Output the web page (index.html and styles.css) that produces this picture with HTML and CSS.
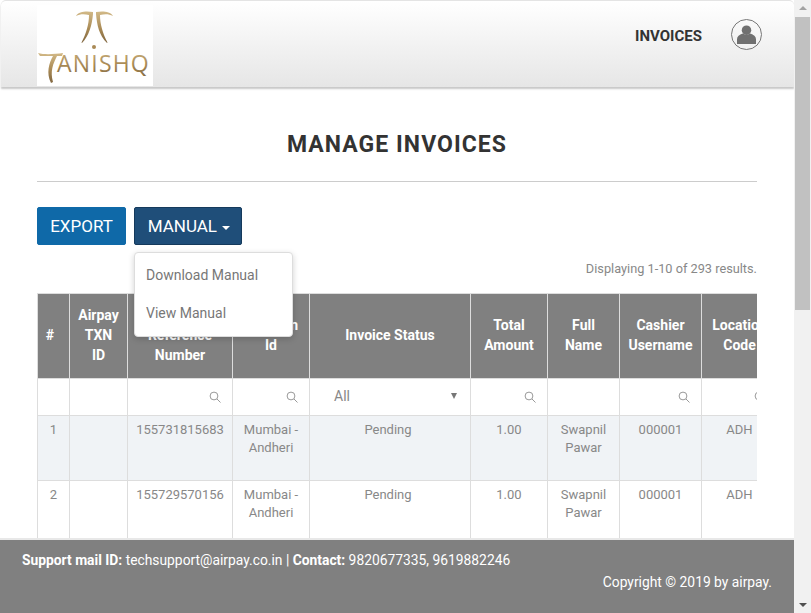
FILE: index.html
```html
<!DOCTYPE html>
<html lang="en">
<head>
  <meta charset="UTF-8" />
  <meta name="viewport" content="width=device-width, initial-scale=1.0">
  <title>Manage Invoices</title>
  <link rel="stylesheet" href="styles.css">
</head>
<body>
  <div class="page">
    <header class="topbar">
      <div class="logo">
        <svg width="116" height="81" viewBox="0 0 116 81">
          <defs>
            <linearGradient id="gold" x1="0" y1="0" x2="0" y2="1">
              <stop offset="0" stop-color="#d2b987"/>
              <stop offset="0.55" stop-color="#a98a55"/>
              <stop offset="1" stop-color="#806640"/>
            </linearGradient>
          </defs>
          <path d="M39 11C42 6 50 6 56 7V9C55 20 52 31 45 38L44.500 37.500C49 29 52 19 52 10 47 9 43 9 39 11z" fill="url(#gold)"/>
          <path d="M76 11C73 6 65 6 59 7V9C60 20 62 30 70 38L70.500 37.500C66 29 63 19 63 10 68 9 72 9 76 11z" fill="url(#gold)"/>
          <circle cx="57" cy="42" r="2" fill="#a98a55"/>
          <path d="M1 48C8 50 18 49 26 48L25 51C23 51 21 51 20 51 16 59 13 66 16 77L14 78C9 68 12 58 16 51 11 51 6 51 3 51z" fill="url(#gold)"/>
          <text class="logo-text" x="20" y="67" fill="url(#gold)">ANISHQ</text>
        </svg>
      </div>
      <nav class="topnav">
        <a class="navlink">INVOICES</a>
        <span class="avatar">
          <svg width="19" height="19" viewBox="0 0 20 20"><circle cx="10" cy="5.500" r="5" fill="#707070"/><path d="M0 20v-5c0-3 2.500-5 6-6 2 1.500 6 1.500 8 0 3.500 1 6 3 6 6v5z" fill="#707070"/></svg>
        </span>
      </nav>
    </header>

    <main class="content">
      <h1 class="title">MANAGE INVOICES</h1>
      <hr class="rule">

      <div class="actions">
        <button class="btn btn-export">EXPORT</button>
        <div class="dropdown">
          <button class="btn btn-manual">MANUAL <span class="caret"></span></button>
          <ul class="dropdown-menu">
            <li>Download Manual</li>
            <li>View Manual</li>
          </ul>
        </div>
      </div>

      <div class="summary">Displaying 1-10 of 293 results.</div>

      <div class="table-wrap">
        <table class="grid">
          <colgroup>
            <col class="c-num"><col class="c-txn"><col class="c-ref"><col class="c-loc"><col class="c-status"><col class="c-total"><col class="c-name"><col class="c-cashier"><col class="c-code">
          </colgroup>
          <thead>
            <tr class="heads">
              <th class="h-num">#</th>
              <th>Airpay TXN ID</th>
              <th>Invoice Reference Number</th>
              <th>Location Id</th>
              <th>Invoice Status</th>
              <th>Total Amount</th>
              <th>Full Name</th>
              <th>Cashier Username</th>
              <th>Location Code</th>
            </tr>
            <tr class="filters">
              <td></td>
              <td></td>
              <td><svg class="search" viewBox="0 0 12 12"><circle cx="5" cy="5" r="3.900"/><path d="M8 8l3.500 3.500"/></svg></td>
              <td><svg class="search" viewBox="0 0 12 12"><circle cx="5" cy="5" r="3.900"/><path d="M8 8l3.500 3.500"/></svg></td>
              <td><div class="select"><span>All</span><span class="select-arrow"></span></div></td>
              <td><svg class="search" viewBox="0 0 12 12"><circle cx="5" cy="5" r="3.900"/><path d="M8 8l3.500 3.500"/></svg></td>
              <td></td>
              <td><svg class="search" viewBox="0 0 12 12"><circle cx="5" cy="5" r="3.900"/><path d="M8 8l3.500 3.500"/></svg></td>
              <td><svg class="search" viewBox="0 0 12 12"><circle cx="5" cy="5" r="3.900"/><path d="M8 8l3.500 3.500"/></svg></td>
            </tr>
          </thead>
          <tbody>
            <tr class="odd">
              <td>1</td><td></td><td>155731815683</td><td>Mumbai - Andheri</td><td class="status">Pending</td><td>1.00</td><td>Swapnil Pawar</td><td>000001</td><td>ADH</td>
            </tr>
            <tr>
              <td>2</td><td></td><td>155729570156</td><td>Mumbai - Andheri</td><td class="status">Pending</td><td>1.00</td><td>Swapnil Pawar</td><td>000001</td><td>ADH</td>
            </tr>
          </tbody>
        </table>
      </div>
    </main>

    <footer class="footer">
      <div><b>Support mail ID:</b> techsupport@airpay.co.in | <b>Contact:</b> 9820677335, 9619882246</div>
      <div class="copy">Copyright © 2019 by airpay.</div>
    </footer>
  </div>

  <div class="scrollbar">
    <span class="arrow-up"></span>
    <span class="thumb"></span>
    <span class="arrow-down"></span>
  </div>
</body>
</html>
```

FILE: styles.css
```css
html, body { margin: 0; height: 100%; overflow: hidden; }
body { display: flex; font-family: Roboto, "Liberation Sans", sans-serif; font-size: 14px; color: #888; background: #fff; }

.page { width: 794px; height: 613px; display: flex; flex-direction: column; }

.topbar { height: 87px; flex: none; box-sizing: border-box; margin-left: 1px; padding: 4px 32px 0 36px; display: flex; justify-content: space-between; background: linear-gradient(#fff, #e6e6e6); border-top: 1px solid #e4e4e4; border-radius: 5px 5px 0 0; box-shadow: 0 2px 2px #c8c8c8; }
.logo { width: 116px; height: 81px; background: #fff; }
.logo svg { display: block; }
.logo-text { font-family: "Open Sans", sans-serif; font-size: 23px; letter-spacing: 1.200px; }

.topnav { display: flex; align-items: flex-start; gap: 29px; padding-top: 14px; }
.navlink { font-weight: 700; font-size: 15px; color: #333; line-height: 34px; }
.avatar { width: 29px; height: 29px; border: 1px solid #777; border-radius: 50%; display: flex; align-items: center; justify-content: center; overflow: hidden; }

.content { flex: 1; min-height: 0; overflow: hidden; padding: 0 37px; }
.title { margin: 44px 0 0; font-size: 23px; line-height: 28px; font-weight: 700; letter-spacing: 1.050px; color: #333; text-align: center; }
.rule { margin: 22px 0 0; border: none; border-top: 1px solid #ccc; }

.actions { display: flex; gap: 8px; margin-top: 25px; }
.btn { height: 38px; box-sizing: border-box; border-radius: 2px; color: #fff; font-family: inherit; font-size: 17px; padding: 0; white-space: nowrap; }
.btn-export { width: 89px; background: #0f69a8; border: 1px solid #0f69a8; }
.btn-manual { width: 108px; padding-left: 2px; background: #1f4e79; border: 1px solid #153a5c; }
.caret { display: inline-block; margin-left: 1px; vertical-align: middle; border-top: 4px solid #fff; border-left: 4px solid transparent; border-right: 4px solid transparent; }

.dropdown { position: relative; }
.dropdown-menu { position: absolute; top: 45px; left: 0; z-index: 5; width: 159px; box-sizing: border-box; margin: 0; padding: 4px 0 3px; list-style: none; background: #fff; border: 1px solid #ddd; border-radius: 4px; box-shadow: 0 2px 6px rgba(0,0,0,.18); }
.dropdown-menu li { height: 38px; line-height: 36px; padding-left: 11px; color: #777; }

.summary { margin-top: 15px; height: 33px; line-height: 17px; font-size: 12.750px; color: #888; text-align: right; }

.table-wrap { overflow: hidden; }
.grid { width: 740px; table-layout: fixed; border-collapse: collapse; }
.c-num { width: 32px; } .c-txn { width: 58px; } .c-ref { width: 105px; } .c-loc { width: 77px; } .c-status { width: 161px; }
.c-total { width: 77px; } .c-name { width: 72px; } .c-cashier { width: 82px; } .c-code { width: 76px; }
.grid th, .grid td { border: 1px solid #ddd; text-align: center; }
.heads th { height: 82px; padding: 0 8px 2px; background: #808080; color: #fff; font-size: 14px; line-height: 20px; font-weight: 700; }
.heads .h-num { padding: 0 7px 2px 0; }
.filters td { height: 34px; padding: 0 0 2px; text-align: right; background: #fff; }
.search { width: 12px; height: 12px; margin-right: 11px; vertical-align: middle; fill: none; stroke: #999; stroke-width: 1; }
.select { display: flex; justify-content: space-between; align-items: center; padding: 0 13px 0 24px; color: #888; }
.select-arrow { border-top: 6px solid #777; border-left: 3px solid transparent; border-right: 3px solid transparent; }
tbody td { height: 59px; padding: 5px 8px 0; vertical-align: top; font-size: 13px; line-height: 18px; color: #888; }
tbody .status { padding-right: 12px; }
.odd td { background: #f0f3f6; }

.footer { flex: none; height: 75px; box-sizing: border-box; border-top: 2px solid #e8e8e8; position: relative; padding: 10px 22px 0; background: #808080; background-clip: padding-box; color: #fff; font-size: 13.830px; line-height: 20px; }
.copy { margin-top: 2px; text-align: right; }

.scrollbar { width: 17px; height: 613px; flex: none; background: #f1f1f1; display: flex; flex-direction: column; align-items: center; }
.thumb { width: 15px; height: 293px; margin-top: 7px; background: #c1c1c1; }
.arrow-up { margin-top: 6px; border-bottom: 4px solid #a3a3a3; border-left: 4px solid transparent; border-right: 4px solid transparent; }
.arrow-down { margin-top: auto; margin-bottom: 6px; border-top: 4px solid #505050; border-left: 4px solid transparent; border-right: 4px solid transparent; }
```
